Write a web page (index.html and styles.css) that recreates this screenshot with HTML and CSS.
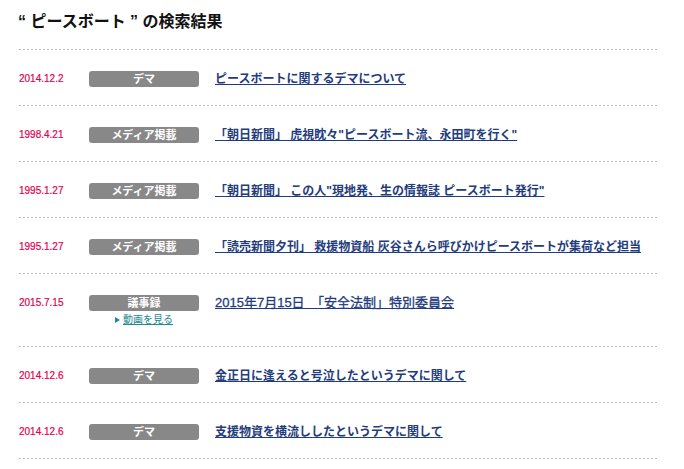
FILE: index.html
```html
<!DOCTYPE html>
<html lang="ja">
<head>
<meta charset="utf-8">
<title>検索結果</title>
<link rel="stylesheet" href="styles.css">
</head>
<body>
<div class="page">
  <h1 class="heading">“ ピースボート ” の検索結果</h1>
  <ul class="results">
    <li class="row">
      <span class="date">2014.12.2</span>
      <div class="tagcol"><span class="tag">デマ</span></div>
      <a class="title" href="#">ピースボートに関するデマについて</a>
    </li>
    <li class="row">
      <span class="date">1998.4.21</span>
      <div class="tagcol"><span class="tag">メディア掲載</span></div>
      <a class="title" href="#">「朝日新聞」 虎視眈々"ピースボート流、永田町を行く"</a>
    </li>
    <li class="row">
      <span class="date">1995.1.27</span>
      <div class="tagcol"><span class="tag">メディア掲載</span></div>
      <a class="title" href="#">「朝日新聞」 この人"現地発、生の情報誌 ピースボート発行"</a>
    </li>
    <li class="row">
      <span class="date">1995.1.27</span>
      <div class="tagcol"><span class="tag">メディア掲載</span></div>
      <a class="title" href="#">「読売新聞夕刊」 救援物資船 灰谷さんら呼びかけピースボートが集荷など担当</a>
    </li>
    <li class="row">
      <span class="date">2015.7.15</span>
      <div class="tagcol">
        <span class="tag">議事録</span>
        <a class="video" href="#">動画を見る</a>
      </div>
      <a class="title title-lg" href="#">2015年7月15日　「安全法制」特別委員会</a>
    </li>
    <li class="row">
      <span class="date">2014.12.6</span>
      <div class="tagcol"><span class="tag">デマ</span></div>
      <a class="title" href="#">金正日に逢えると号泣したというデマに関して</a>
    </li>
    <li class="row">
      <span class="date">2014.12.6</span>
      <div class="tagcol"><span class="tag">デマ</span></div>
      <a class="title" href="#">支援物資を横流ししたというデマに関して</a>
    </li>
  </ul>
</div>
</body>
</html>
```

FILE: styles.css
```css
* { box-sizing: border-box; }

body {
  margin: 0;
  background: #fff;
  font-family: "Liberation Sans", "Noto Sans CJK JP", sans-serif;
  color: #111;
}

.page {
  width: 657px;
  padding-left: 18px;
}

.heading {
  margin: 0;
  padding-top: 12px;
  font-size: 16px;
  line-height: 20px;
  font-weight: bold;
  color: #111;
  height: 50px;
  background-image: linear-gradient(to right, #b8b8b8 50%, transparent 50%);
  background-size: 4px 1px;
  background-repeat: repeat-x;
  background-position: 1px bottom;
}

.results {
  list-style: none;
  margin: 0;
  padding: 0;
}

.row {
  display: grid;
  grid-template-columns: 71px 110px 1fr;
  align-items: start;
  padding: 21px 0 19px;
  background-image: linear-gradient(to right, #b8b8b8 50%, transparent 50%);
  background-size: 4px 1px;
  background-repeat: repeat-x;
  background-position: 1px bottom;
}

.date {
  font-size: 10px;
  line-height: 16px;
  color: #e5004f;
  padding-left: 1px;
  -webkit-text-stroke: 0.2px #e5004f;
}

.tagcol {
  display: flex;
  flex-direction: column;
  align-items: center;
}

.tag {
  display: block;
  width: 110px;
  height: 16px;
  line-height: 16px;
  border-radius: 3px;
  background: #888888;
  color: #fff;
  font-size: 11px;
  font-weight: bold;
  text-align: center;
}

.video {
  display: flex;
  align-items: center;
  height: 16px;
  font-size: 10px;
  line-height: 16px;
  color: #23888f;
  text-decoration: underline;
  margin-top: 1px;
}

.video::before {
  content: "";
  display: inline-block;
  width: 0;
  height: 0;
  border-top: 3px solid transparent;
  border-bottom: 3px solid transparent;
  border-left: 5px solid #23888f;
  margin-right: 3px;
}

.title {
  margin-left: 16px;
  font-size: 12px;
  line-height: 16px;
  font-weight: bold;
  color: #1f3c7c;
  text-decoration: underline;
  justify-self: start;
}

.title-lg {
  font-size: 13px;
  font-weight: normal;
  -webkit-text-stroke: 0.3px #1f3c7c;
}
```
